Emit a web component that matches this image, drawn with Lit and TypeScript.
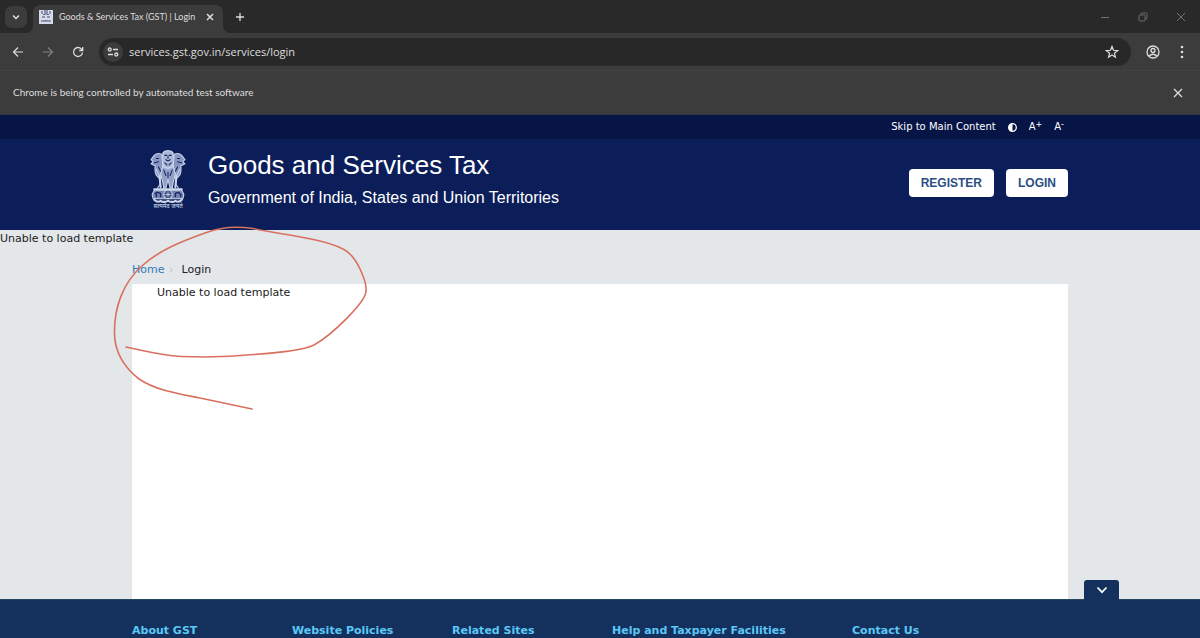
import { LitElement, html, css, svg } from "lit";
import { customElement, state } from "lit/decorators.js";

/* National emblem: three lions on an abacus with the motto beneath. */
const emblem = svg`
  <g fill="none" stroke="#cdd6ea" stroke-linecap="round" stroke-linejoin="round">
    <path fill="#aab6d6" stroke-width="1" d="M13 3 Q17 0 21 3 L23 8 L22 14 L20 18 H14 L12 14 L11 8Z"/>
    <path fill="#8795c0" stroke-width="1" d="M11 5 Q7 3 4 6 L1 10 L3 12 L1 14 L5 16 Q4 21 6 25 L9 28 L13 24 L12 14Z"/>
    <path fill="#8795c0" stroke-width="1" d="M23 5 Q27 3 30 6 L33 10 L31 12 L33 14 L29 16 Q30 21 28 25 L25 28 L21 24 L22 14Z"/>
    <path fill="#93a1c9" stroke-width="1" d="M12 16 Q17 21 22 16 L24 24 L22 31 L21 37 H19 L17 29 L15 37 H13 L12 31 L10 24Z"/>
    <path stroke="#15275f" stroke-width="1" d="M14 6 h2 M18 6 h2 M15 10 Q17 12 19 10 M17 7 V9 M14 13 L16 15 M20 13 L18 15 M6 9 h2 M26 9 h2 M4 13 L8 12 M30 13 L26 12 M8 17 L10 21 M26 17 L24 21 M13 20 L15 25 M21 20 L19 25 M17 22 V27"/>
    <path stroke-width="2" d="M9 25 L10 36 M25 25 L24 36"/>
    <path stroke-width="1" d="M12 4 L14 2 M22 4 L20 2 M6 19 L8 24 M28 19 L26 24 M9 34 L7 37 M25 34 L27 37"/>
    <path stroke-width="2" d="M4 38 H30"/>
    <path fill="#7484b3" stroke-width="1" d="M4 39 H30 L32 43 L31 47 H3 L2 43Z"/>
    <circle cx="17" cy="43" r="4" fill="#20316b" stroke-width="1"/>
    <path stroke-width="0.7" d="M13 43 H21 M17 39 V47 M14 40 L20 46 M20 40 L14 46"/>
    <path stroke="#15275f" stroke-width="1.3" d="M5 42 L7 41 L10 42 V45 M6 43 V45 M24 45 V42 L27 41 L29 43 V45"/>
    <path stroke-width="2" d="M4 48 Q7 51 10 49 Q13 51 17 49 Q21 51 24 49 Q27 51 30 48"/>
  </g>`;

@customElement("browser-chrome")
export class BrowserChrome extends LitElement {
  static styles = css`
    :host { display: block; flex: none; background: #3c3c3c; color: #dedede; font-family: "Open Sans", "Noto Sans", sans-serif; }
    * { box-sizing: border-box; }
    button { display: grid; place-items: center; padding: 0; border: 0; background: none; color: inherit; font: inherit; }
    svg { display: block; fill: none; stroke: currentColor; }
    .tabs { display: flex; align-items: center; height: 33px; padding: 0 0 0 5px; background: #292929; }
    .search { width: 22px; height: 22px; border-radius: 7px; background: #3c3c3c; }
    .tab { position: relative; display: flex; align-items: center; align-self: flex-end; width: 190px; height: 28px; margin-left: 6px; padding: 0 5px 4px 6px; border-radius: 7px 7px 0 0; background: #3c3c3c; }
    .tab::before, .tab::after { content: ""; position: absolute; bottom: 0; width: 7px; height: 7px; }
    .tab::before { left: -7px; background: radial-gradient(circle at 0 0, #292929 7px, #3c3c3c 7px); }
    .tab::after { right: -7px; background: radial-gradient(circle at 100% 0, #292929 7px, #3c3c3c 7px); }
    .title { flex: 1; min-width: 0; margin-left: 6px; font-family: Lato, "Open Sans", sans-serif; font-size: 9px; line-height: 16px; white-space: nowrap; }
    .tab button { width: 16px; height: 16px; }
    .add { width: 20px; height: 22px; margin-left: 7px; }
    .window { display: flex; margin-left: auto; color: #727272; }
    .window button { width: 38px; height: 30px; }
    .bar { display: flex; align-items: center; height: 38px; padding: 0 6px 0 3px; border-bottom: 1px solid #434343; }
    .nav { width: 30px; height: 26px; }
    .off { color: #818181; }
    .omni { display: flex; align-items: center; flex: 1; height: 28px; margin: 0 10px 0 6px; padding: 0 7px 0 4px; border-radius: 14px; background: #282828; }
    .site { width: 20px; height: 20px; border-radius: 50%; background: #3c3c3c; }
    .url { flex: 1; min-width: 0; height: 20px; margin-left: 6px; padding: 0; border: 0; outline: 0; background: none; color: #dedede; font: inherit; font-size: 11px; }
    .star { width: 24px; height: 24px; }
    .tool { width: 24px; height: 24px; }
    .tool + .tool { margin-left: 5px; }
    .info { display: flex; align-items: center; justify-content: space-between; height: 44px; padding: 0 13px; border-bottom: 1px solid #333744; font-family: Lato, "Open Sans", sans-serif; font-size: 10px; }
    .info button { width: 18px; height: 18px; }
  `;

  render() {
    return html`
      <div class="tabs">
        <button class="search" aria-label="Search tabs"><svg width="10" height="8" viewBox="0 0 10 8" stroke-width="1.5"><path d="M2 2.500 5 5.500 8 2.500"/></svg></button>
        <div class="tab">
          <svg width="14" height="14" viewBox="0 0 14 14" stroke="none"><path fill="#d7dae8" stroke="none" d="M0 0h14v14H0z"/><path fill="#8d92ad" stroke="none" d="M2 1h2v3H2zM5 0h4v5H5zM10 1h2v3h-2zM3 6h3v2H3zM8 6h3v2H8zM2 10h10v2H2z"/><path fill="#5f6c9a" stroke="none" d="M4 4h2v1H4zM8 4h2v1H8zM6 10h2v1H6z"/></svg>
          <span class="title">Goods &amp; Services Tax (GST) | Login</span>
          <button aria-label="Close tab"><svg width="8" height="8" viewBox="0 0 8 8" stroke-width="1.500"><path d="M1 1 7 7M7 1 1 7"/></svg></button>
        </div>
        <button class="add" aria-label="New tab"><svg width="10" height="10" viewBox="0 0 10 10" stroke-width="1.300"><path d="M5 1V9M1 5H9"/></svg></button>
        <div class="window">
          <button aria-label="Minimize"><svg width="10" height="10" viewBox="0 0 10 10"><path d="M1 5.500H9"/></svg></button>
          <button aria-label="Restore"><svg width="10" height="10" viewBox="0 0 10 10" stroke-width="0.900"><rect x="1" y="3" width="6" height="6" rx="1"/><path d="M3 3V2Q3 1 4 1H8Q9 1 9 2V6Q9 7 8 7H7"/></svg></button>
          <button aria-label="Close window"><svg width="10" height="10" viewBox="0 0 10 10"><path d="M1 1 9 9M9 1 1 9"/></svg></button>
        </div>
      </div>
      <div class="bar">
        <button class="nav" aria-label="Back"><svg width="12" height="12" viewBox="0 0 12 12" stroke-width="1.200"><path d="M11 6H1.500M6 1.500 1.500 6 6 10.500"/></svg></button>
        <button class="nav off" aria-label="Forward"><svg width="12" height="12" viewBox="0 0 12 12" stroke-width="1.200"><path d="M1 6H10.500M6 1.500 10.500 6 6 10.500"/></svg></button>
        <button class="nav" aria-label="Reload"><svg width="12" height="12" viewBox="0 0 12 12" stroke-width="1.300"><path d="M10.500 6.500A4.500 4.500 0 1 1 9.300 2.900L10.500 4.200M10.700 1V4.500H7.200"/></svg></button>
        <div class="omni">
          <button class="site" aria-label="Site information"><svg width="12" height="10" viewBox="0 0 12 10" stroke-width="1.300"><circle cx="2.700" cy="2.500" r="1.500"/><path d="M6 2.500H11M1 7.500H6"/><circle cx="9.300" cy="7.500" r="1.500"/></svg></button>
          <input class="url" aria-label="Address" .value=${"services.gst.gov.in/services/login"}>
          <button class="star" aria-label="Bookmark"><svg width="14" height="14" viewBox="0 0 14 14" stroke-width="1.200"><path d="M7 1.500 8.500 5.300 12.500 5.600 9.400 8.200 10.400 12.200 7 10 3.600 12.200 4.600 8.200 1.500 5.600 5.500 5.300Z"/></svg></button>
        </div>
        <button class="tool" aria-label="Profile"><svg width="14" height="14" viewBox="0 0 14 14" stroke-width="1.300"><circle cx="7" cy="7" r="6"/><circle cx="7" cy="5.500" r="2"/><path d="M3 11Q7 7.500 11 11"/></svg></button>
        <button class="tool" aria-label="Menu"><svg width="4" height="14" viewBox="0 0 4 14"><g fill="#dedede" stroke="none"><circle cx="2" cy="2" r="1.300"/><circle cx="2" cy="7" r="1.300"/><circle cx="2" cy="12" r="1.300"/></g></svg></button>
      </div>
      <div class="info">
        <span>Chrome is being controlled by automated test software</span>
        <button aria-label="Dismiss"><svg width="10" height="10" viewBox="0 0 10 10" stroke-width="1.300"><path d="M1 1 9 9M9 1 1 9"/></svg></button>
      </div>`;
  }
}

@customElement("gst-header")
export class GstHeader extends LitElement {
  static styles = css`
    :host { display: block; flex: none; background: #0b1e59; color: #fff; }
    * { box-sizing: border-box; }
    .wrap { width: 78%; margin: 0 auto; }
    .strip { background: #061446; font: 10px/24px "DejaVu Sans", sans-serif; }
    .strip .wrap { display: flex; align-items: center; justify-content: flex-end; height: 24px; padding-right: 4px; }
    .strip a { color: inherit; text-decoration: none; }
    .strip button { padding: 0; border: 0; background: none; color: inherit; font: inherit; }
    .contrast { display: grid; margin: 0 12px; }
    .small { margin-left: 12px; }
    sup { font-size: 8px; line-height: 0; vertical-align: 3px; }
    .brand { display: flex; align-items: flex-start; height: 91px; padding: 8px 0 11px 18px; font-family: "Liberation Sans", Arial, sans-serif; }
    .emblem { display: flex; flex-direction: column; align-items: center; width: 36px; margin-right: 22px; padding-top: 2px; }
    .motto { font: 6px/8px "Noto Sans Devanagari", "Noto Sans", sans-serif; white-space: nowrap; color: #dfe5f3; }
    h1 { margin: 0; font-size: 26px; line-height: 36px; font-weight: 400; }
    p { margin: 0; font-size: 16px; line-height: 30px; }
    .actions { display: flex; align-self: center; gap: 12px; margin-left: auto; }
    .actions a { padding: 0 12px; border-radius: 4px; background: #fff; color: #2c4e86; font-size: 12px; line-height: 28px; font-weight: 700; text-decoration: none; }
  `;

  render() {
    return html`
      <div class="strip"><div class="wrap">
        <a href="#main">Skip to Main Content</a>
        <button class="contrast" aria-label="Toggle contrast"><svg width="9" height="9" viewBox="0 0 9 9"><circle cx="4.500" cy="4.500" r="3.800" fill="none" stroke="#fff" stroke-width="1.300"/><path fill="#fff" d="M4.500 0.500V8.500A4 4 0 0 1 4.500 0.500Z"/></svg></button>
        <button aria-label="Increase text size">A<sup>+</sup></button>
        <button class="small" aria-label="Decrease text size">A<sup>-</sup></button>
      </div></div>
      <div class="wrap brand">
        <div class="emblem">
          <svg width="36" height="54" viewBox="0 0 34 51">${emblem}</svg>
          <span class="motto">सत्यमेव जयते</span>
        </div>
        <div><h1>Goods and Services Tax</h1><p>Government of India, States and Union Territories</p></div>
        <nav class="actions"><a href="#register">REGISTER</a><a href="#login">LOGIN</a></nav>
      </div>`;
  }
}

@customElement("app-root")
export class AppRoot extends LitElement {
  @state() private footerLinks = ["About GST", "Website Policies", "Related Sites", "Help and Taxpayer Facilities", "Contact Us"];

  static styles = css`
    :host { position: relative; display: flex; flex-direction: column; min-height: 100vh; background: #e3e7ea; color: #222; font: 11px/17px "DejaVu Sans", Verdana, sans-serif; }
    * { box-sizing: border-box; }
    .wrap { width: 78%; margin: 0 auto; }
    main { display: flex; flex-direction: column; flex: 1; }
    .crumbs { display: flex; align-items: center; padding: 14px 0 6px; }
    .crumbs a { color: #337ab7; text-decoration: none; }
    .crumbs svg { margin: 0 8px 0 5px; }
    .panel { flex: 1; padding: 0 25px; background: #fff; }
    footer { position: relative; background: #14315d; border-top: 1px solid #24465f; }
    .cols { display: grid; grid-template-columns: 160px 160px 160px 240px 1fr; padding-top: 24px; }
    h2 { margin: 0; color: #5bc8f5; font-size: 11px; line-height: 14px; }
    .toggle { position: absolute; right: 81px; bottom: 100%; display: grid; place-items: center; width: 35px; height: 20px; padding: 0; border: 0; border-radius: 3px 3px 0 0; background: #14315d; }
    .mark { position: absolute; left: 110px; top: 222px; pointer-events: none; }
  `;

  render() {
    return html`
      <browser-chrome></browser-chrome>
      <gst-header></gst-header>
      <main id="main">
        <div>Unable to load template</div>
        <nav class="wrap crumbs" aria-label="Breadcrumb">
          <a href="#home">Home</a>
          <svg width="4" height="6" viewBox="0 0 4 6"><path d="M1 0.500 3.300 3 1 5.500" fill="none" stroke="#bbb"/></svg>
          <span>Login</span>
        </nav>
        <section class="wrap panel">Unable to load template</section>
      </main>
      <footer>
        <button class="toggle" aria-label="Collapse footer"><svg width="12" height="8" viewBox="0 0 12 8"><path d="M1.500 1.500 6 6.200 10.500 1.500" fill="none" stroke="#fff" stroke-width="1.700"/></svg></button>
        <div class="wrap cols">${this.footerLinks.map((t) => html`<h2>${t}</h2>`)}</div>
      </footer>
      <svg class="mark" width="262" height="192" viewBox="110 222 262 192" aria-hidden="true">
        <path fill="none" stroke="#d9705f" stroke-width="1.600" stroke-linecap="round" d="M126 347C148 352 165 356 182 356.500Q220 358 254 354.500C276 353 302 351 314 345C332 335 366 302 366 291C367 284 358 256 343 249C322 238 277 234 253 228.500C236 226 218 228 205 233C180 242 160 250 143 265C122 283 114 309 114.500 334C115 354 125 368 139 379C157 391 180 394 200 398L252 409"/>
      </svg>`;
  }
}
